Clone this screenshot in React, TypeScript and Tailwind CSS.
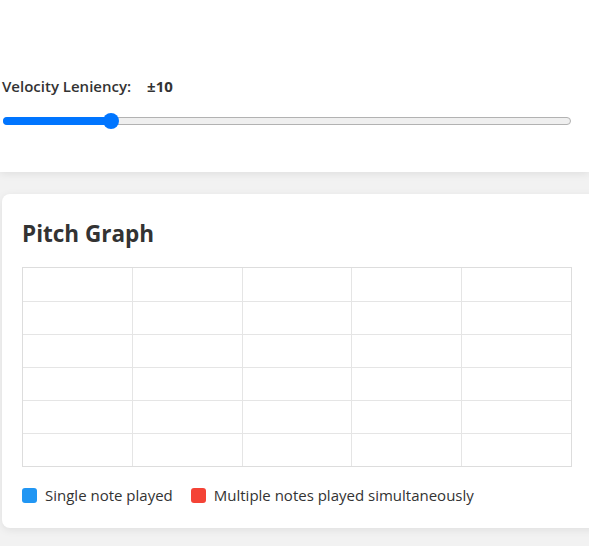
const rows = [0, 1, 2, 3, 4, 5];
const cols = [0, 1, 2, 3, 4];

const Slider = () => {
  return (
    <div className="relative ml-[3px] mr-[18px] h-[16px]">
      <div className="absolute left-0 right-0 top-[4px] h-[8px] rounded-full border border-[#b2b2b2] bg-[#efefef]" />
      <div className="absolute left-0 top-[4px] h-[8px] w-[108px] rounded-full bg-[#0075ff]" />
      <div className="absolute left-[100px] top-0 h-[16px] w-[16px] rounded-full bg-[#0075ff]" />
    </div>
  );
};

export default function App() {
  return (
    <div
      className="h-[546px] w-[589px] overflow-hidden bg-[#f2f2f2] text-[#333]"
      style={{ fontFamily: '"Open Sans", "Noto Sans", sans-serif' }}
    >
      <div className="h-[172px] bg-white pt-[75px] shadow-[0_2px_8px_rgba(0,0,0,0.08)]">
        <div className="flex h-[22px] items-center pl-[2px] text-[15px] font-semibold">
          <span>Velocity Leniency:</span>
          <span className="ml-[16px] font-bold">±10</span>
        </div>
        <div className="mt-[16px]">
          <Slider />
        </div>
      </div>

      <div className="ml-[2px] mt-[22px] w-[600px] rounded-[8px] bg-white px-[20px] pb-[21px] pt-[24px] shadow-[0_2px_8px_rgba(0,0,0,0.08)]">
        <h2 className="text-[22.5px] font-bold leading-[32px]">Pitch Graph</h2>
        <div className="mt-[17px] w-[550px] border border-[#ddd]">
          {rows.map((r) => (
            <div key={r} className={`flex h-[33px] ${r > 0 ? 'border-t border-[#e5e5e5]' : ''}`}>
              {cols.map((c) => (
                <div key={c} className={`h-full flex-1 ${c > 0 ? 'border-l border-[#e5e5e5]' : ''}`} />
              ))}
            </div>
          ))}
        </div>
        <div className="mt-[17px] flex items-center text-[15px]">
          <span className="h-[15px] w-[15px] rounded-[3px] bg-[#2196f3]" />
          <span className="ml-[8px]">Single note played</span>
          <span className="ml-[18px] h-[15px] w-[15px] rounded-[3px] bg-[#f44336]" />
          <span className="ml-[8px]">Multiple notes played simultaneously</span>
        </div>
      </div>
    </div>
  );
}
